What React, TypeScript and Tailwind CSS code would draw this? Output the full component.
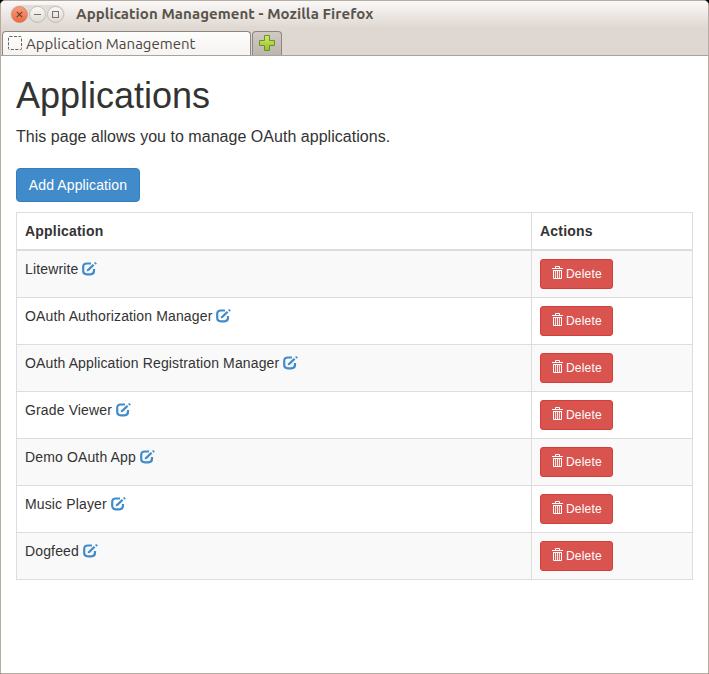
import React from "react";

const applications = [
  "Litewrite",
  "OAuth Authorization Manager",
  "OAuth Application Registration Manager",
  "Grade Viewer",
  "Demo OAuth App",
  "Music Player",
  "Dogfeed",
];

function EditIcon() {
  return (
    <svg className="ml-1 mt-[3px] h-[14px] w-[15px] shrink-0" viewBox="0 0 15 14" fill="none">
      <path
        d="M9 1.5H5Q1.2 1.5 1.2 5V8.8Q1.2 12.3 5 12.3H8.4Q12 12.3 12 8.8V7"
        stroke="#428bca"
        strokeWidth="2.2"
      />
      <path d="M4.6 9.6l.7-2.4L10.8 2l1.6 1.6-5.4 5.2z" fill="#428bca" />
      <path d="M12 1.1l1.1-1.1 1.8 1.5-1.1 1.2z" fill="#428bca" />
    </svg>
  );
}

function TrashIcon() {
  return (
    <svg className="-mt-[2px] h-[13px] w-[11px] shrink-0" viewBox="0 0 11 13" fill="none" stroke="white">
      <path d="M3.5 2V.5h4V2M0 2.5h11M1.5 4v8.5h8V4M1 4.5h9" />
      <path d="M3.6 5v7M5.5 5v7M7.4 5v7" strokeWidth="0.9" />
    </svg>
  );
}

function WindowButtons() {
  return (
    <svg className="ml-[8px] mt-[2px] h-[22px] w-[58px] shrink-0" viewBox="0 0 58 22" fill="none">
      <defs>
        <linearGradient id="close" x2="0" y2="1">
          <stop stopColor="#f79d7d" />
          <stop offset="1" stopColor="#ec6a3c" />
        </linearGradient>
        <linearGradient id="plain" x2="0" y2="1">
          <stop stopColor="#fbfaf9" />
          <stop offset="1" stopColor="#ded8d3" />
        </linearGradient>
      </defs>
      <rect x="1" y="2" width="55" height="19" rx="9.5" fill="#e3ddd8" />
      <circle cx="10.5" cy="11.5" r="8" fill="url(#close)" stroke="#c7826a" strokeWidth=".7" />
      <circle cx="28.5" cy="11.5" r="8" fill="url(#plain)" stroke="#b5ada6" strokeWidth=".7" />
      <circle cx="46.5" cy="11.5" r="8" fill="url(#plain)" stroke="#b5ada6" strokeWidth=".7" />
      <path d="M7.8 8.8l5.4 5.4M13.2 8.8l-5.4 5.4" stroke="#6a3b2c" strokeWidth="1.1" />
      <path d="M25 11.5h7" stroke="#77716b" />
      <rect x="43.5" y="8.5" width="6" height="6" stroke="#77716b" />
    </svg>
  );
}

export default function App() {
  return (
    <div className="h-[674px] w-[709px] bg-black">
      <div className="flex h-full flex-col overflow-hidden rounded-t-[5px] border border-[#b8aba0] bg-white text-[#333] [font-family:'Liberation_Sans',Arial,sans-serif]">
        <header className="flex h-[55px] shrink-0 flex-col border-b border-[#aaa29b] bg-[linear-gradient(#faf9f8_0px,#dfd7d1_27px,#dfd7d1_100%)] [font-family:Ubuntu,'Noto_Sans',sans-serif]">
          <div className="flex h-[30px] shrink-0">
            <WindowButtons />
            <span className="ml-[9px] whitespace-nowrap text-[15px] leading-[26px] font-bold tracking-[0.08px] text-[#59534c]">
              Application Management - Mozilla Firefox
            </span>
          </div>
          <div className="flex h-[24px] items-stretch">
            <div className="ml-px flex w-[249px] items-center rounded-t-[4px] border border-b-0 border-[#8d8680] bg-[linear-gradient(#fdfdfc,#f6f4f3)]">
              <svg className="-mt-px ml-[5px] h-[14px] w-[14px] shrink-0" viewBox="0 0 14 14" fill="none">
                <rect x=".5" y=".5" width="13" height="13" rx="1" stroke="#65605b" strokeDasharray="3 1.5" />
              </svg>
              <span className="ml-1 whitespace-nowrap text-[15px] leading-[23px] text-[#4b4641]">Application Management</span>
            </div>
            <div className="ml-px flex w-[30px] items-center justify-center rounded-t-[4px] border border-b-0 border-[#8d8680] bg-[linear-gradient(#d0cac5,#bdb6b0)]">
              <svg className="-mt-px h-4 w-4" viewBox="0 0 16 16">
                <defs>
                  <linearGradient id="plus" x2="0" y2="1">
                    <stop stopColor="#d3e86a" />
                    <stop offset="1" stopColor="#99bd2e" />
                  </linearGradient>
                </defs>
                <path d="M5.5.5h5v5h5v5h-5v5h-5v-5h-5v-5h5z" fill="url(#plus)" stroke="#669522" />
              </svg>
            </div>
          </div>
        </header>
        <main className="px-[15px]">
          <h1 className="mt-[20px] h-[40px] text-[36px] leading-[40px] font-normal whitespace-nowrap">Applications</h1>
          <p className="mt-[9px] text-[16px] leading-[23px] tracking-[0.03px] whitespace-nowrap">This page allows you to manage OAuth applications.</p>
          <button className="mt-[20px] block h-[34px] w-[124px] rounded-[4px] border border-[#357ebd] bg-[#428bca] text-[14px] leading-5 tracking-[0.12px] whitespace-nowrap text-white">
            Add Application
          </button>
          <table className="mt-[10px] w-[677px] table-fixed border-collapse border border-[#ddd] text-left text-[14px] leading-5 tracking-[0.14px]">
            <colgroup>
              <col className="w-[515px]" />
              <col />
            </colgroup>
            <thead>
              <tr>
                <th className="border border-b-2 border-[#ddd] p-2 tracking-[0.2px]">Application</th>
                <th className="border border-b-2 border-[#ddd] p-2 tracking-[0.2px]">Actions</th>
              </tr>
            </thead>
            <tbody>
              {applications.map((name) => (
                <tr key={name} className="odd:bg-[#f9f9f9]">
                  <td className="border border-[#ddd] p-2 align-top">
                    <div className="flex whitespace-nowrap">
                      {name}
                      <EditIcon />
                    </div>
                  </td>
                  <td className="border border-[#ddd] p-2 align-top">
                    <button className="flex h-[30px] w-[73px] items-center rounded-[3px] border border-[#d43f3a] bg-[#d9534f] pb-px pl-[11px] text-[12px] leading-[18px] tracking-[0.2px] text-white">
                      <TrashIcon />
                      <span className="ml-[3px]">Delete</span>
                    </button>
                  </td>
                </tr>
              ))}
            </tbody>
          </table>
        </main>
      </div>
    </div>
  );
}
